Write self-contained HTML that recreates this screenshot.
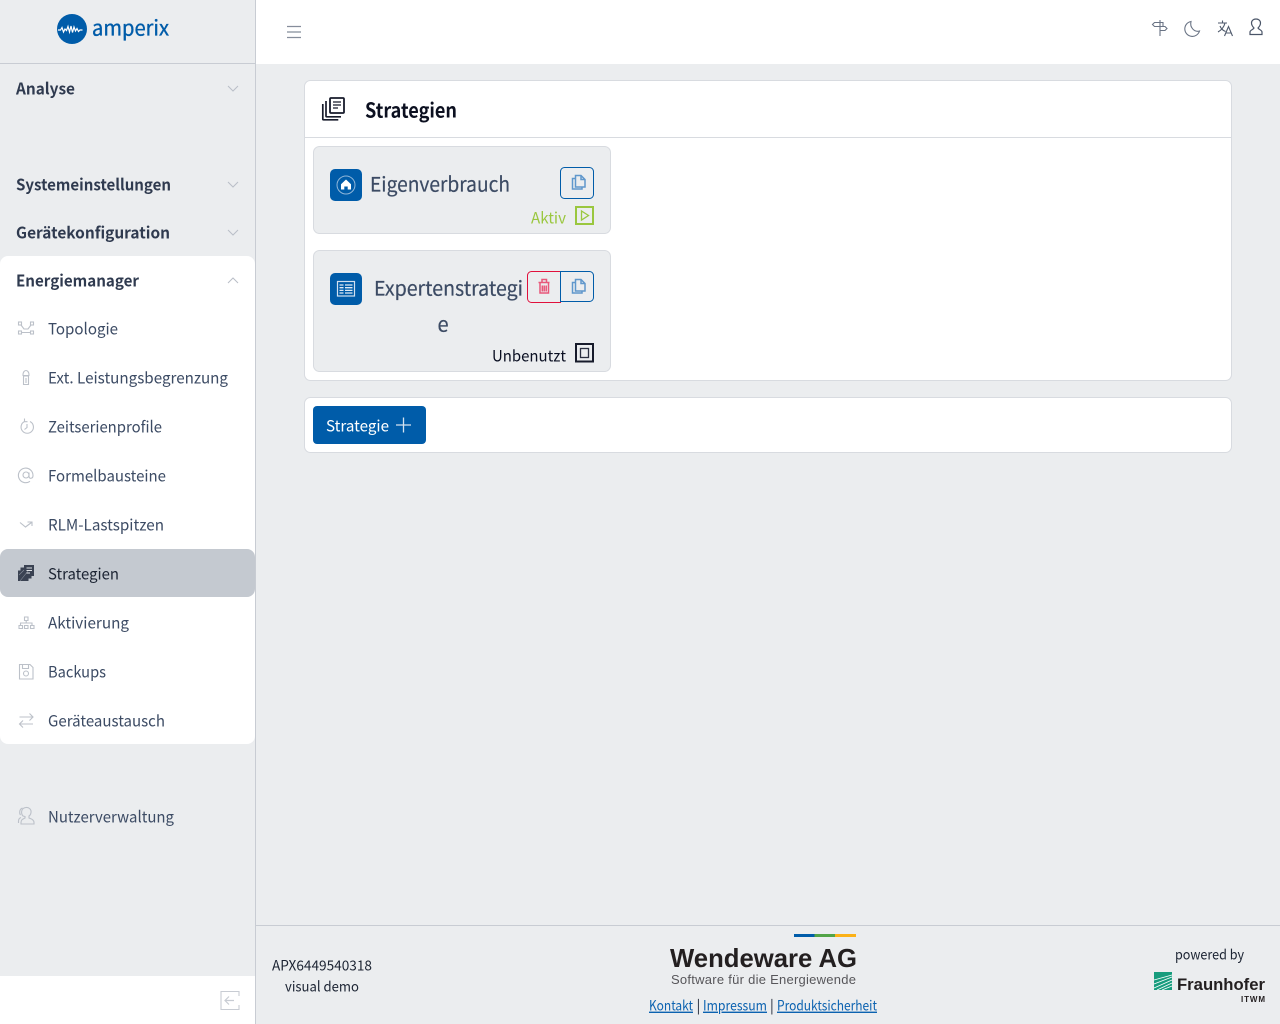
<!DOCTYPE html>
<html lang="de"><head><meta charset="utf-8"><title>Strategien</title>
<style>
html,body{margin:0;padding:0;width:1280px;height:1024px;overflow:hidden;background:#ebedef}
svg{display:block;position:absolute;left:0;top:0}
text{font-family:"Noto Sans CJK JP","Liberation Sans",sans-serif;white-space:pre}
text:not(.lib){transform:translateY(.6px)}
.lib{font-family:"Liberation Sans",sans-serif}
.m{font-size:15.8px;fill:#3c4b64}
.b{font-size:15.8px;font-weight:700;fill:#2f3a4f}
.i{fill:none;stroke:#bcc1c9;stroke-width:1.1}
.t{fill:none;stroke:#6a7485;stroke-width:1.1}
.l{font-size:14px;fill:#0b62b0;text-decoration:underline}
</style></head><body>
<svg width="1280" height="1024" viewBox="0 0 1280 1024" xmlns="http://www.w3.org/2000/svg">
<!-- shell -->
<rect width="1280" height="1024" fill="#ebedef"/>
<rect x="256" width="1024" height="64" fill="#fff"/>
<rect x="255" width="1" height="1024" fill="#c8ccd3"/>
<rect y="63" width="255" height="1" fill="#c8ccd3"/>
<rect x="256" y="925" width="1024" height="1" fill="#c8ccd3"/>
<rect x="0" y="256" width="255" height="488" rx="8" fill="#fff"/>
<rect x="0" y="549" width="255" height="48" rx="8" fill="#c4c9d0"/>
<rect x="0" y="976" width="255" height="48" fill="#fff"/>

<!-- logo -->
<circle cx="72" cy="29" r="15" fill="#005ca9"/>
<path d="M58 30 h2.500 l1.500 -2.500 1.500 4.500 1.500 -3 1.500 1.500 1.500 -4 1.500 5.500 1.500 -6 1.500 6.500 1.500 -5.500 1.500 4 1.500 -2.500 1.500 3 1.500 -1.500 h2.500" fill="none" stroke="#fff" stroke-width="1.200"/>
<text x="92" y="35" font-size="21" fill="#005ca9" stroke="#005ca9" stroke-width=".35" textLength="77" lengthAdjust="spacingAndGlyphs">amperix</text>

<!-- sidebar group headings -->
<text class="b" x="16" y="94" textLength="59" lengthAdjust="spacingAndGlyphs">Analyse</text>
<text class="b" x="16" y="190" textLength="155" lengthAdjust="spacingAndGlyphs">Systemeinstellungen</text>
<text class="b" x="16" y="238" textLength="154" lengthAdjust="spacingAndGlyphs">Gerätekonfiguration</text>
<text class="b" x="16" y="286" textLength="123" lengthAdjust="spacingAndGlyphs">Energiemanager</text>
<g fill="none" stroke="#b9bec7" stroke-width="1">
<path d="M228 86l5 5 5-5"/><path d="M228 182l5 5 5-5"/><path d="M228 230l5 5 5-5"/><path d="M228 283l5-5 5 5"/>
</g>

<!-- sidebar items -->
<text class="m" x="48" y="334" textLength="70" lengthAdjust="spacingAndGlyphs">Topologie</text>
<text class="m" x="48" y="383" textLength="180" lengthAdjust="spacingAndGlyphs">Ext. Leistungsbegrenzung</text>
<text class="m" x="48" y="432" textLength="114" lengthAdjust="spacingAndGlyphs">Zeitserienprofile</text>
<text class="m" x="48" y="481" textLength="118" lengthAdjust="spacingAndGlyphs">Formelbausteine</text>
<text class="m" x="48" y="530" textLength="116" lengthAdjust="spacingAndGlyphs">RLM-Lastspitzen</text>
<text class="m" x="48" y="579" textLength="71" lengthAdjust="spacingAndGlyphs" style="fill:#1c2433">Strategien</text>
<text class="m" x="48" y="628" textLength="81" lengthAdjust="spacingAndGlyphs">Aktivierung</text>
<text class="m" x="48" y="677" textLength="58" lengthAdjust="spacingAndGlyphs">Backups</text>
<text class="m" x="48" y="726" textLength="117" lengthAdjust="spacingAndGlyphs">Geräteaustausch</text>
<text class="m" x="48" y="822" textLength="126" lengthAdjust="spacingAndGlyphs">Nutzerverwaltung</text>

<!-- sidebar icons -->
<g class="i">
<rect x="18.500" y="322" width="3" height="3"/><rect x="30.500" y="322" width="3" height="3"/><rect x="18.500" y="331" width="3" height="3"/><rect x="30.500" y="331" width="3" height="3"/>
<path d="M21 325l3 4h4l3-4M21.500 332.500h9"/>
<path d="M23.500 376v8.500h5V376zM22.500 375.500h7M23 375c0-6 6-6 6 0M26 378v5"/>
<path d="M30 421.500a6.200 6.200 0 1 1-5.500 0M24.500 418.500v3.200h3M27 424v3.500l-2.500 2"/>
<circle cx="26" cy="475" r="3"/><path d="M29 472.500v4c0 2.500 4 2.500 4-1a7.300 7.300 0 1 0-3 5.800"/>
<path d="M20 522.500l5.500 4.500 6-4.500M27.500 522h4.500v4"/>
<path d="M24.500 617h3.500v3.500h-3.500zM26.200 620.500v2.500M20.500 625.500v-2.500h11.500v2.500M19 625.500h3.500v3h-3.500zM24.500 625.500h3.500v3h-3.500zM30.500 625.500h3.500v3h-3.500z"/>
<path d="M19.500 664.500h10.500l3 3v11.500h-13.500zM22.500 664.500v4h6v-4"/><circle cx="26" cy="673.500" r="2.500"/>
<path d="M19.500 717h13.500M29.500 713.500l3.500 3.500-3.500 3.500M33 724h-13.500M23 720.500l-3.500 3.500 3.500 3.500"/>
<path d="M23 816c-2-2-2.500-8 3-8.500 3-0.300 5.500 2 5 5-0.300 2-1 3-2 3.500v2c2 1 5 1.500 5 4.500v1.500H21v-1.500c0-3 2-3.500 4-4.500v-1.500z"/>
<path d="M18.500 823v-2c0-2 1-3 2.500-3.500 M20.500 815c-1.500-2-1-6 2-7"/>
<path d="M221 991.500h18v18h-18z" stroke="#c8ccd3"/>
</g>
<rect x="234" y="996" width="6" height="9" fill="#fff"/>
<path d="M234 1000.500h-9M229 996.500l-4 4 4 4" fill="none" stroke="#c8ccd3" stroke-width="1.200"/>
<path d="M24 565H34V576H31.500V578.500H28.500V581H18V570.500H20.500V567.500H24z" fill="#3a4252"/>
<path d="M20 581l8-10M19 575l5-5" stroke="#8a909c" stroke-width=".6" fill="none"/>
<path d="M26.500 568h5.500M26.500 570.500h5.500M26.500 573h3.500" stroke="#dfe2e6" stroke-width="1.100"/>

<!-- header -->
<path d="M287 26.500h14M287 32h14M287 37.500h14" stroke="#858d9b" stroke-width="1.300"/>
<g class="t">
<path d="M1160 20v16M1163 22.500h-8.500l-2 2 2 2h8.500zM1160 26.500h5l2 2-2 2h-5"/>
<path d="M1191 21.500a7.500 7.500 0 1 0 8.500 9.500c-5 1.500-10-3.500-8.500-9.500z"/>
<path d="M1218 23h9M1222.500 20.500V23M1225 23c-1 4-3.500 7-7 9M1220 26c1 2.500 3 4.500 5.500 5.500M1224.500 36l4-9.500 4 9.500M1226 33h5" stroke="#4f5a6c"/>
<path d="M1250 34.500V32c0-2 3.500-2.500 4-4-1.500-1.500-2.500-3-2.500-5 0-2.500 2-4 4.500-4s4.500 1.500 4.500 4c0 2-1 3.500-2.500 5 .5 1.500 4 2 4 4v2.500z" stroke="#4a5568" stroke-width="1.200"/>
</g>

<!-- main card -->
<rect x="304.500" y="80.500" width="927" height="300" rx="6" fill="#fff" stroke="#d8dbe0"/>
<rect x="305" y="137" width="926" height="1" fill="#d8dbe0"/>
<g fill="none" stroke="#171b2b" stroke-width="1.700">
<rect x="330" y="98" width="14" height="15" rx="1" fill="#fff" stroke-width="1.800"/>
<path d="M333 102h8M333 105h8M333 108h5" stroke-width="1.300"/>
<path d="M326 101v15c0 .5 .3 .8 .8 .8H341"/><path d="M322.800 104v15c0 .5 .3 .8 .8 .8h14.700"/>
</g>
<text x="365" y="117" font-size="20" font-weight="700" fill="#0c1020" textLength="92" lengthAdjust="spacingAndGlyphs">Strategien</text>

<!-- Eigenverbrauch -->
<rect x="313.500" y="146.500" width="297" height="87" rx="6" fill="#ebedef" stroke="#d8dbe0"/>
<rect x="330" y="169" width="32" height="32" rx="5" fill="#005ca9"/>
<circle cx="346" cy="185" r="9" fill="none" stroke="#8fb6d9" stroke-width="1"/>
<path d="M346 179.500l5 4.800v5.200h-3.300v-3h-3.400v3H341v-5.200z" fill="#fff"/>
<text x="370" y="191" font-size="20" fill="#3c4b64" stroke="#3c4b64" stroke-width=".2" textLength="140" lengthAdjust="spacingAndGlyphs">Eigenverbrauch</text>
<rect x="560.500" y="167.500" width="33" height="31" rx="4" fill="none" stroke="#005ca9"/>
<g fill="none" stroke="#5f97cc" stroke-width="1.500"><path d="M575.500 175.500h5.500l4 4v7.500h-9.500zM581 175.500v4h4"/><path d="M575.500 178.500h-3v10.500h9.500v-2"/></g>
<text x="531" y="223" font-size="15.800" fill="#9ac73f" textLength="35" lengthAdjust="spacingAndGlyphs">Aktiv</text>
<rect x="576" y="207" width="17" height="17" fill="none" stroke="#9ac73f" stroke-width="2"/>
<path d="M581.500 211l7 4.500-7 4.500z" fill="none" stroke="#9ac73f" stroke-width="1.300"/>

<!-- Expertenstrategie -->
<rect x="313.500" y="250.500" width="297" height="121" rx="6" fill="#ebedef" stroke="#d8dbe0"/>
<rect x="330" y="273" width="32" height="32" rx="5" fill="#005ca9"/>
<rect x="337.500" y="281.500" width="17" height="14.500" fill="none" stroke="#d2e1f0" stroke-width="1.200"/>
<path d="M339.500 285h4M345 285h7.500M339.500 287.700h4M345 287.700h7.500M339.500 290.400h4M345 290.400h7.500M339.500 293h4M345 293h7.500" stroke="#dfeaf5" stroke-width="1.300"/>
<text x="374" y="295" font-size="20" fill="#3c4b64" stroke="#3c4b64" stroke-width=".2" textLength="149" lengthAdjust="spacingAndGlyphs">Expertenstrategi</text>
<text x="437.500" y="331" font-size="20" fill="#3c4b64" stroke="#3c4b64" stroke-width=".2">e</text>
<path d="M560.500 271.500h-29a4 4 0 0 0-4 4v23a4 4 0 0 0 4 4h29z" fill="none" stroke="#e0103c"/>
<path d="M560.500 271.500h29a4 4 0 0 1 4 4v22a4 4 0 0 1-4 4h-29z" fill="none" stroke="#005ca9"/>
<g fill="none" stroke="#e8577a" stroke-width="1.500"><path d="M538.500 282.500h11M542 282v-2.500h4.500v2.500M540 283v10h8.500V283M542.300 285.500v6M544.200 285.500v6M546.200 285.500v6"/></g>
<g fill="none" stroke="#5f97cc" stroke-width="1.500"><path d="M575.500 279.500h5.500l4 4v7.500h-9.500zM581 279.500v4h4"/><path d="M575.500 282.500h-3v10.500h9.500v-2"/></g>
<text x="492" y="361" font-size="15.800" fill="#0a0f22" textLength="74" lengthAdjust="spacingAndGlyphs">Unbenutzt</text>
<rect x="576" y="344" width="17" height="17.500" fill="none" stroke="#171b2b" stroke-width="2"/>
<rect x="580.500" y="348.500" width="8" height="9" fill="none" stroke="#2a2f40" stroke-width="1.300"/>

<!-- add card -->
<rect x="304.500" y="397.500" width="927" height="55" rx="6" fill="#fff" stroke="#d8dbe0"/>
<rect x="313" y="406" width="113" height="38" rx="4" fill="#005ca9"/>
<text x="326" y="431" font-size="15.800" fill="#fff" textLength="63" lengthAdjust="spacingAndGlyphs">Strategie</text>
<path d="M396 425h15M403.500 417.500v15" stroke="#d5e3f0" stroke-width="1.300"/>

<!-- footer -->
<text x="272" y="970" font-size="14" fill="#1c2433" textLength="100" lengthAdjust="spacingAndGlyphs">APX6449540318</text>
<text x="285" y="991" font-size="14" fill="#1c2433" textLength="74" lengthAdjust="spacingAndGlyphs">visual demo</text>
<rect x="794" y="934" width="20.500" height="3" fill="#005ca9"/>
<rect x="814.500" y="934" width="20.500" height="3" fill="#52a447"/>
<rect x="835" y="934" width="21" height="3" fill="#fbb117"/>
<text class="lib" x="670" y="967" font-size="26" font-weight="700" fill="#231f20" textLength="187" lengthAdjust="spacingAndGlyphs">Wendeware AG</text>
<text class="lib" x="671" y="984" font-size="13" fill="#57565a" textLength="185" lengthAdjust="spacing">Software für die Energiewende</text>
<a><text class="l" x="649" y="1010" textLength="44" lengthAdjust="spacingAndGlyphs">Kontakt</text></a>
<text x="696.500" y="1010" font-size="14" fill="#1c2433">|</text>
<a><text class="l" x="703" y="1010" textLength="64" lengthAdjust="spacingAndGlyphs">Impressum</text></a>
<text x="770" y="1010" font-size="14" fill="#1c2433">|</text>
<a><text class="l" x="777" y="1010" textLength="100" lengthAdjust="spacingAndGlyphs">Produktsicherheit</text></a>
<text x="1175" y="959" font-size="14" fill="#1c2433" textLength="69" lengthAdjust="spacingAndGlyphs">powered by</text>
<rect x="1154" y="972" width="18" height="18" fill="#179c7d"/>
<path d="M1154 988l18-8M1154 984l18-7M1157 990l15-7M1154 980l18-5M1162 990l10-4" stroke="#fff" stroke-width=".8" fill="none"/>
<text class="lib" x="1177" y="990" font-size="17" font-weight="700" fill="#231f20" textLength="88" lengthAdjust="spacingAndGlyphs">Fraunhofer</text>
<text class="lib" x="1241" y="1002" font-size="8" font-weight="700" fill="#231f20" textLength="24">ITWM</text>
</svg>
</body></html>
